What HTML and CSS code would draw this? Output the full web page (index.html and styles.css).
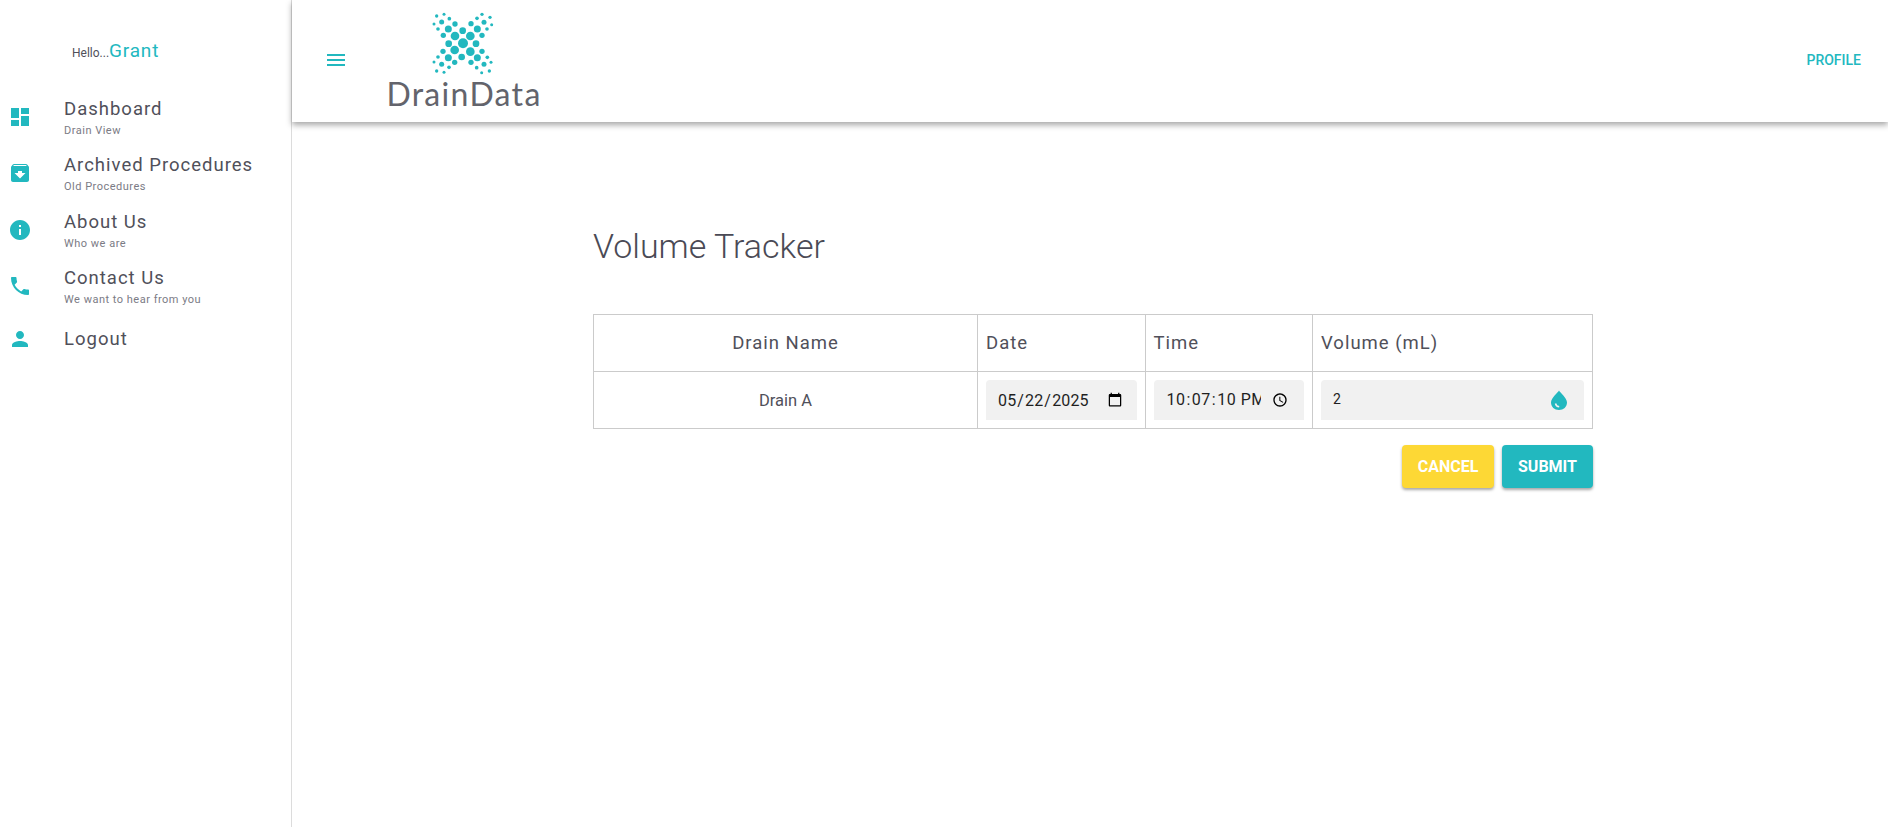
FILE: index.html
```html
<!DOCTYPE html>
<html lang="en">
<head>
<meta charset="utf-8">
<title>Volume Tracker</title>
<link rel="stylesheet" href="styles.css">
</head>
<body>
<div class="app">
  <aside class="sidebar">
    <div class="hello"><span class="hello-small">Hello...</span><span class="hello-name">Grant</span></div>
    <nav class="nav">
      <a class="nav-item">
        <svg class="nav-icon" viewBox="0 0 24 24"><path d="M3 13h8V3H3v10zm0 8h8v-6H3v6zm10 0h8V11h-8v10zm0-18v6h8V3h-8z"/></svg>
        <span class="nav-text"><span class="nav-title">Dashboard</span><span class="nav-sub">Drain View</span></span>
      </a>
      <a class="nav-item">
        <svg class="nav-icon" viewBox="0 0 24 24"><path d="M20.54 5.23l-1.39-1.68C18.88 3.21 18.47 3 18 3H6c-.47 0-.88.21-1.16.55L3.46 5.23C3.17 5.57 3 6.02 3 6.5V19c0 1.1.9 2 2 2h14c1.1 0 2-.9 2-2V6.5c0-.48-.17-.93-.46-1.27zM12 17.5L6.5 12H10v-2h4v2h3.5L12 17.5zM5.12 5l.81-1h12l.94 1H5.12z"/></svg>
        <span class="nav-text"><span class="nav-title">Archived Procedures</span><span class="nav-sub">Old Procedures</span></span>
      </a>
      <a class="nav-item">
        <svg class="nav-icon" viewBox="0 0 24 24"><path d="M12 2C6.48 2 2 6.48 2 12s4.48 10 10 10 10-4.48 10-10S17.52 2 12 2zm1 15h-2v-6h2v6zm0-8h-2V7h2v2z"/></svg>
        <span class="nav-text"><span class="nav-title">About Us</span><span class="nav-sub">Who we are</span></span>
      </a>
      <a class="nav-item">
        <svg class="nav-icon" viewBox="0 0 24 24"><path d="M6.62 10.79c1.44 2.83 3.76 5.14 6.59 6.59l2.2-2.2c.27-.27.67-.36 1.02-.24 1.12.37 2.33.57 3.57.57.55 0 1 .45 1 1V20c0 .55-.45 1-1 1-9.39 0-17-7.61-17-17 0-.55.45-1 1-1h3.5c.55 0 1 .45 1 1 0 1.25.2 2.45.57 3.57.11.35.03.74-.25 1.02l-2.2 2.2z"/></svg>
        <span class="nav-text"><span class="nav-title">Contact Us</span><span class="nav-sub">We want to hear from you</span></span>
      </a>
      <a class="nav-item nav-item-single">
        <svg class="nav-icon" viewBox="0 0 24 24"><path d="M12 12c2.21 0 4-1.79 4-4s-1.79-4-4-4-4 1.79-4 4 1.79 4 4 4zm0 2c-2.67 0-8 1.34-8 4v2h16v-2c0-2.66-5.33-4-8-4z"/></svg>
        <span class="nav-text"><span class="nav-title">Logout</span></span>
      </a>
    </nav>
  </aside>
  <div class="main">
    <header class="topbar">
      <svg class="menu-icon" viewBox="0 0 24 24"><path d="M3 18h18v-2H3v2zm0-5h18v-2H3v2zm0-7v2h18V6H3z"/></svg>
      <div class="logo">
        <svg class="logo-mark" viewBox="0 0 270 210">
          <circle cx="129" cy="115" r="15"/>
          <circle cx="105" cy="93" r="13"/><circle cx="151" cy="93" r="13"/><circle cx="104" cy="135" r="13"/><circle cx="151" cy="140" r="13"/>
          <circle cx="128" cy="77" r="10"/><circle cx="125" cy="156" r="10"/><circle cx="86" cy="116" r="10"/><circle cx="168" cy="116" r="10"/>
          <circle cx="85" cy="72" r="10.5"/><circle cx="172" cy="72" r="10.5"/><circle cx="85" cy="158" r="10.5"/><circle cx="172" cy="158" r="10.5"/>
          <circle cx="105" cy="57" r="8"/><circle cx="153" cy="56" r="8"/><circle cx="70" cy="91" r="8"/><circle cx="186" cy="91" r="8"/>
          <circle cx="69" cy="139" r="8"/><circle cx="186" cy="139" r="8"/><circle cx="104" cy="172" r="8"/><circle cx="153" cy="172" r="8"/>
          <circle cx="65" cy="51" r="7.5"/><circle cx="192" cy="52" r="7.5"/><circle cx="65" cy="178" r="7.5"/><circle cx="192" cy="178" r="7.5"/>
          <circle cx="88" cy="41" r="5.5"/><circle cx="171" cy="40" r="5.5"/><circle cx="54" cy="72" r="5.5"/><circle cx="201" cy="72" r="5.5"/>
          <circle cx="54" cy="156" r="5.5"/><circle cx="202" cy="157" r="5.5"/><circle cx="87" cy="187" r="5.5"/><circle cx="170" cy="188" r="5.5"/>
          <circle cx="50" cy="33" r="5"/><circle cx="186" cy="28" r="5"/><circle cx="72" cy="28" r="4.5"/><circle cx="210" cy="37" r="5"/>
          <circle cx="42" cy="57" r="4.5"/><circle cx="215" cy="59" r="4.5"/><circle cx="42" cy="171" r="4.5"/><circle cx="213" cy="172" r="4.5"/>
          <circle cx="50" cy="198" r="5"/><circle cx="185" cy="203" r="4.5"/><circle cx="72" cy="202" r="4.5"/><circle cx="208" cy="198" r="5"/>
        </svg>
        <span class="logo-text">DrainData</span>
      </div>
      <a class="profile">Profile</a>
    </header>
    <main class="content">
      <h1 class="page-title">Volume Tracker</h1>
      <table class="tracker">
        <colgroup>
          <col class="col-name"><col class="col-date"><col class="col-time"><col class="col-vol">
        </colgroup>
        <thead>
          <tr>
            <th class="center">Drain Name</th>
            <th>Date</th>
            <th>Time</th>
            <th>Volume (mL)</th>
          </tr>
        </thead>
        <tbody>
          <tr>
            <td class="center name-cell">Drain A</td>
            <td><input class="field field-native field-date" type="date" value="2025-05-22"></td>
            <td><input class="field field-native" type="time" step="1" value="22:07:10"></td>
            <td>
              <div class="field field-volume">
                <span class="volume-value">2</span>
                <svg class="drop-icon" viewBox="0 0 24 24"><path d="M12 2.500c-1 2-8 7.500-8 12C4 19 7.500 22 12 22s8-3 8-7.500c0-4.500-7-10-8-12z"/><path class="drop-shine" d="M8.500 15.500c.4 2 1.800 3.100 3.700 3.300"/></svg>
              </div>
            </td>
          </tr>
        </tbody>
      </table>
      <div class="actions">
        <button class="btn btn-cancel" type="button">Cancel</button>
        <button class="btn btn-submit" type="button">Submit</button>
      </div>
    </main>
  </div>
</div>
</body>
</html>
```
FILE: styles.css
```css
* { box-sizing: border-box; }
html, body { margin: 0; height: 100%; }
body {
  font-family: Roboto, "Liberation Sans", sans-serif;
  color: #50505a;
  background: #fff;
  overflow: hidden;
}
.app { display: flex; height: 827px; }
.sidebar {
  width: 292px;
  flex: none;
  border-right: 1px solid #dcdcdc;
}
.hello {
  padding: 39px 0 0 72px;
  height: 80px;
  display: flex;
  align-items: baseline;
  line-height: 24px;
}
.hello-small { font-size: 12px; }
.hello-name { font-size: 19px; color: #22b8bf; letter-spacing: .8px; }
.nav { display: flex; flex-direction: column; padding-top: 9px; }
.nav-item { display: flex; align-items: center; height: 56.250px; }
.nav-item-single { height: 50px; }
.nav-icon { width: 24px; height: 24px; margin-left: 8px; margin-right: 32px; fill: #22b8bf; flex: none; }
.nav-text { display: flex; flex-direction: column; }
.nav-title { font-size: 18.500px; line-height: 26px; letter-spacing: 1px; color: #50505a; }
.nav-sub { font-size: 11px; line-height: 16px; letter-spacing: .5px; color: #7b7b85; margin-top: 1px; margin-bottom: -1px; }
.main { flex: 1; min-width: 0; display: flex; flex-direction: column; }
.topbar {
  height: 122px;
  flex: none;
  display: flex;
  align-items: center;
  padding: 0 26px 2px 32px;
  box-shadow: 0 3px 6px rgba(0,0,0,.35);
}
.menu-icon { width: 24px; height: 24px; fill: #22b8bf; flex: none; margin-right: 38px; }
.logo { display: flex; flex-direction: column; align-items: center; width: 156px; }
.logo-mark { width: 90px; height: 70px; fill: #22b8bf; margin: -3px 0 0 2px; display: block; }
.logo-text {
  font-family: Lato, "Noto Sans", sans-serif;
  font-size: 32px;
  font-weight: 400;
  line-height: 36px;
  letter-spacing: 1.300px;
  color: #63646c;
  margin-top: 1px;
}
.profile {
  margin-left: auto;
  margin-right: 1px;
  font-size: 14px;
  font-weight: 500;
  color: #22b8bf;
  text-transform: uppercase;
}
.content { padding: 104px 0 0 301px; }
.page-title {
  margin: 0;
  font-size: 34px;
  font-weight: 300;
  line-height: 40px;
  color: #4a4a55;
}
.tracker {
  margin-top: 48px;
  width: 999px;
  border-collapse: collapse;
  table-layout: fixed;
}
.col-name { width: 384px; }
.col-date { width: 167.500px; }
.col-time { width: 167.500px; }
.col-vol { width: 280px; }
.tracker th, .tracker td { border: 1px solid #cbcbcb; padding: 0 8px; text-align: left; }
.tracker th {
  height: 57px;
  font-size: 18.500px;
  font-weight: 400;
  letter-spacing: 1px;
  padding-bottom: 1px;
}
.tracker td { height: 57px; }
.tracker .center { text-align: center; }
.name-cell { font-size: 16.500px; padding-bottom: 5px; }
.field {
  display: block;
  width: 100%;
  height: 40px;
  background: #f1f1f1;
  border: 0;
  border-radius: 4px 4px 0 0;
}
.field-native {
  padding: 0 12px;
  font-family: Roboto, sans-serif;
  font-size: 16px;
  letter-spacing: .5px;
  color: #1f1f1f;
  outline: none;
}
.field-date { letter-spacing: .15px; padding-left: 11px; }
.field-volume { display: flex; align-items: center; justify-content: space-between; padding: 0 12px; }
.volume-value { font-size: 14px; color: #1f1f1f; margin-top: -2px; }
.drop-icon { width: 24px; height: 24px; margin-right: 1px; fill: #22b8bf; }
.drop-shine { fill: none; stroke: #f1f1f1; stroke-width: 1.500; }
.actions { width: 1000px; display: flex; justify-content: flex-end; gap: 8px; margin-top: 16px; }
.btn {
  height: 43px;
  width: 92px;
  border: 0;
  border-radius: 4px;
  font-family: Roboto, sans-serif;
  font-size: 16px;
  font-weight: 700;
  color: #fff;
  text-transform: uppercase;
  box-shadow: 0 2px 3px rgba(0,0,0,.35);
}
.btn-cancel { background: #fdd835; }
.btn-submit { background: #22b8bf; width: 91px; }
```
